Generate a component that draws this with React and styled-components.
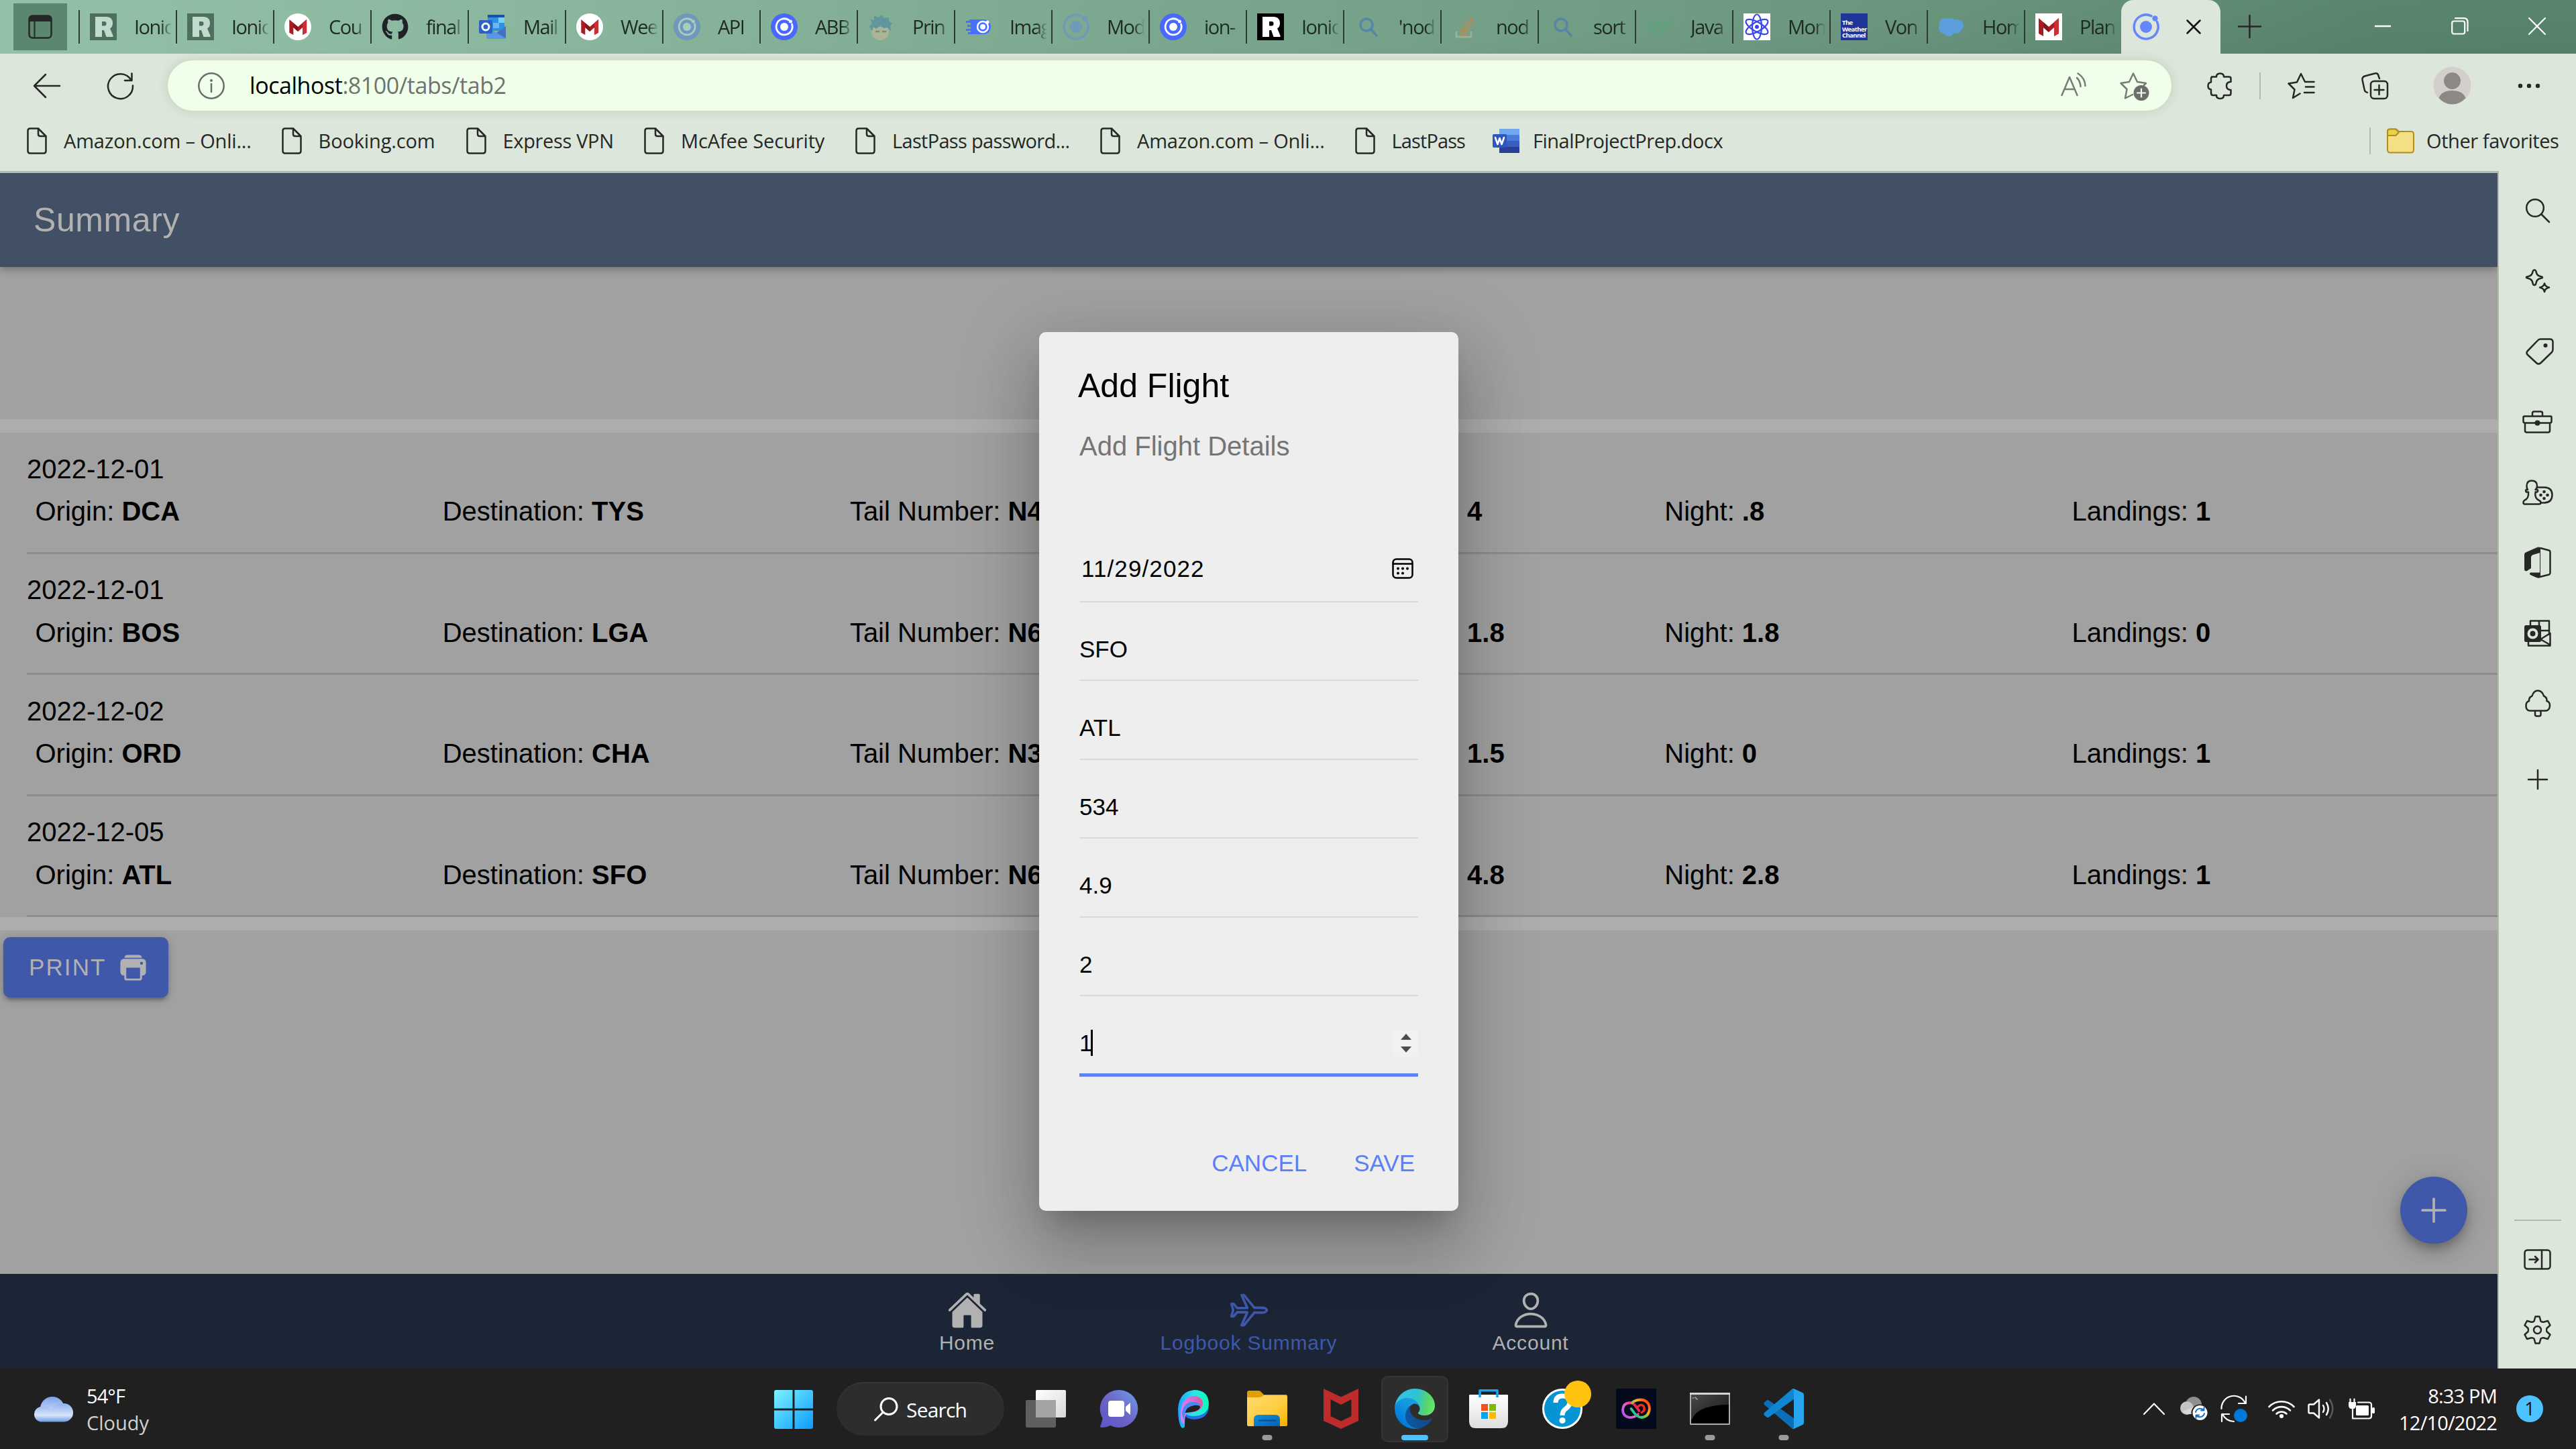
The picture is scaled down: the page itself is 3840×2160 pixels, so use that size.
import React from 'react';
import styled, { createGlobalStyle } from 'styled-components';
import { IoHome, IoAirplaneOutline, IoPersonOutline, IoPrint, IoAdd } from 'react-icons/io5';
import { FaGithub } from 'react-icons/fa';

const UI = '"Open Sans", "Noto Sans", sans-serif';
const PAGE = '"Liberation Sans", Arial, sans-serif';
const INK = '#252825';

const GlobalStyle = createGlobalStyle`
  * { box-sizing: border-box; }
  html, body { margin: 0; padding: 0; background: #202020; overflow: hidden; }
  svg { display: block; flex: none; }
`;

const Screen = styled.div`
  width: 3840px;
  height: 2160px;
  display: flex;
  flex-direction: column;
  overflow: hidden;
  font-family: ${UI};
`;

/* ---------- tab strip ---------- */
const TabStrip = styled.div`
  height: 80px;
  flex: none;
  display: flex;
  align-items: center;
  padding-left: 20px;
  background: linear-gradient(176deg, rgba(0, 0, 0, 0) 60%, rgba(0, 0, 0, 0.07) 100%),
    linear-gradient(98deg, #93c0a8 0%, #8bb79f 20%, #7ba78e 45%, #6c977f 72%, #5b8870 92%, #5b8870 100%);
`;
const TabActions = styled.div`
  width: 80px;
  height: 70px;
  background: #5b8770;
  display: flex;
  align-items: center;
  justify-content: center;
  margin-right: 17px;
`;
const Tab = styled.div`
  width: 145px;
  height: 50px;
  flex: none;
  display: flex;
  align-items: center;
  border-left: 2.5px solid #2c3b33;
  padding-left: 15px;
  gap: 26px;
`;
const Favicon = styled.div`
  width: 40px;
  height: 40px;
  flex: none;
  opacity: ${(p) => (p.$dim ? p.$dim : 1)};
`;
const TabTitle = styled.div`
  width: 55px;
  overflow: hidden;
  white-space: nowrap;
  font-size: 29px;
  line-height: 44px;
  letter-spacing: -1.5px;
  color: #1e2a23;
  -webkit-mask-image: linear-gradient(90deg, #000 72%, rgba(0, 0, 0, 0.1) 100%);
  mask-image: linear-gradient(90deg, #000 72%, rgba(0, 0, 0, 0.1) 100%);
`;
const ActiveTab = styled.div`
  width: 148px;
  height: 80px;
  flex: none;
  display: flex;
  align-items: center;
  padding-left: 17px;
  gap: 40px;
  background: #dce6da;
  border-radius: 18px 18px 0 0;
`;
const NewTab = styled.div`
  margin-left: 26px;
  margin-top: -2px;
`;
const WindowButtons = styled.div`
  margin-left: auto;
  display: flex;
  align-items: center;
  gap: 76px;
  padding-right: 38px;
  margin-top: -2px;
`;

/* ---------- toolbar ---------- */
const Toolbar = styled.div`
  height: 85px;
  flex: none;
  display: flex;
  align-items: center;
  padding: 10px 52px 0 48px;
  background: #dce6da;
`;
const ToolSlot = styled.div`
  flex: none;
  margin-left: ${(p) => p.$before || 0}px;
`;
const AddressBar = styled.div`
  flex: none;
  width: 2987px;
  height: 75px;
  margin-left: 51px;
  border-radius: 38px;
  background: #efffea;
  box-shadow: 0 0 16px rgba(90, 110, 80, 0.2);
  display: flex;
  align-items: center;
  padding: 0 33px 0 45px;
  position: relative;
`;
const Url = styled.div`
  flex: 1;
  margin-left: 37px;
  font-size: 34px;
  letter-spacing: -0.45px;
  color: #6f736f;
  margin-top: -2px;
`;
const Host = styled.span`
  color: #000;
`;
const Divider = styled.div`
  width: 2px;
  height: 40px;
  flex: none;
  background: #b0bbae;
  margin-left: ${(p) => p.$before || 0}px;
`;
const Avatar = styled.div`
  width: 57px;
  height: 57px;
  margin-left: 67px;
  flex: none;
`;

/* ---------- favourites ---------- */
const Favorites = styled.div`
  height: 90px;
  flex: none;
  display: flex;
  align-items: center;
  background: #dce6da;
  padding: 0 26px 0 40px;
`;
const Favorite = styled.div`
  flex: none;
  width: ${(p) => p.$w}px;
  display: flex;
  align-items: center;
  gap: ${(p) => p.$gap || 25}px;
  white-space: nowrap;
  font-size: 29px;
  letter-spacing: ${(p) => p.$ls}px;
  line-height: 44px;
  color: ${INK};
`;
const FavSpacer = styled.div`
  flex: 1;
`;

/* ---------- browser body ---------- */
const Body = styled.div`
  flex: 1;
  display: flex;
  min-height: 0;
`;
const PageFrame = styled.div`
  width: 3725px;
  flex: none;
  border-top: 3px solid #b0bbae;
  border-right: 2px solid #b0bbae;
  position: relative;
  display: flex;
  flex-direction: column;
  font-family: ${PAGE};
  overflow: hidden;
`;
const PageHeader = styled.div`
  height: 140px;
  flex: none;
  background: #425066;
  display: flex;
  align-items: center;
  padding-left: 50px;
  font-size: 50px;
  letter-spacing: 0.6px;
  color: #b1b1b1;
  box-shadow: 0 3px 12px rgba(0, 0, 0, 0.32);
  position: relative;
`;
const Content = styled.div`
  flex: 1;
  background: #a1a1a1;
`;
const TopSpace = styled.div`
  height: 227px;
`;
const Band = styled.div`
  height: 20px;
  background: #adadad;
`;
const Entry = styled.div`
  height: 180.5px;
  margin-left: 40px;
  padding-top: 28.5px;
  border-bottom: 3px solid #8d8d8d;
  font-size: 40px;
  line-height: 50px;
  color: #000;
`;
const EntryGrid = styled.div`
  display: grid;
  grid-template-columns: repeat(6, 607.2px);
  margin-top: 13.5px;
`;
const Cell = styled.div`
  padding-left: ${(p) => p.$indent || 12.5}px;
  white-space: nowrap;
`;
const PrintButton = styled.div`
  width: 246px;
  height: 90px;
  margin: 10px 0 0 5px;
  border-radius: 10px;
  background: #3f58a9;
  color: #b1b1b1;
  font-size: 35px;
  letter-spacing: 2.1px;
  display: flex;
  align-items: center;
  padding-left: 38px;
  gap: 16px;
  box-shadow: 0 8px 3px -5px rgba(0, 0, 0, 0.14), 0 5px 5px rgba(0, 0, 0, 0.1), 0 3px 13px rgba(0, 0, 0, 0.2);
`;
const Fab = styled.div`
  position: absolute;
  left: 3578px;
  top: 1496px;
  width: 100px;
  height: 100px;
  border-radius: 50%;
  background: #3f58a9;
  color: #b1b1b1;
  display: flex;
  align-items: center;
  justify-content: center;
  box-shadow: 0 8px 13px -2px rgba(0, 0, 0, 0.2), 0 15px 25px rgba(0, 0, 0, 0.14), 0 3px 45px rgba(0, 0, 0, 0.12);
`;
const TabBar = styled.div`
  height: 141px;
  flex: none;
  background: #1b2536;
  display: flex;
  justify-content: center;
`;
const TabBarItem = styled.div`
  width: 420px;
  padding-top: 24px;
  display: flex;
  flex-direction: column;
  align-items: center;
  font-size: 30px;
  line-height: 37px;
  letter-spacing: 0.8px;
  color: ${(p) => (p.$active ? '#3f58a9' : '#b1b1b1')};
`;

/* ---------- dialog ---------- */
const Dialog = styled.div`
  position: absolute;
  left: 1549px;
  top: 237px;
  width: 625px;
  height: 1310px;
  border-radius: 10px;
  background: #eee;
  padding: 50px 60px 0;
  color: #000;
  box-shadow: 0 28px 38px -18px rgba(0, 0, 0, 0.2), 0 60px 95px 8px rgba(0, 0, 0, 0.14),
    0 22px 115px 20px rgba(0, 0, 0, 0.12);
`;
const DialogTitle = styled.div`
  margin-left: -2px;
  font-size: 50px;
  line-height: 60px;
`;
const DialogSubtitle = styled.div`
  margin-top: 35px;
  font-size: 40px;
  line-height: 50px;
  color: #757575;
`;
const Fields = styled.div`
  margin-top: 90px;
`;
const Field = styled.div`
  height: ${(p) => (p.$focus ? 119.5 : 117.5)}px;
  display: flex;
  align-items: center;
  justify-content: space-between;
  padding-top: ${(p) => (p.$date ? 21 : 25)}px;
  padding-right: ${(p) => (p.$date ? 7 : 0)}px;
  padding-left: ${(p) => (p.$date ? 3 : 0)}px;
  border-bottom: ${(p) => (p.$focus ? '5px solid #5d83f7' : '2.5px solid #d9d9d9')};
  font-size: 35px;
  letter-spacing: ${(p) => (p.$date ? 1.1 : 0)}px;
`;
const FieldValue = styled.div`
  display: flex;
  align-items: center;
`;
const Caret = styled.div`
  width: 3px;
  height: 39px;
  margin-left: -2px;
  background: #000;
`;
const Spinner = styled.div`
  width: 37px;
  height: 40px;
  background: #f1f1f1;
  display: flex;
  flex-direction: column;
  align-items: center;
  justify-content: center;
  gap: 10px;
`;
const Arrow = styled.div`
  width: 0;
  height: 0;
  border-left: 8.5px solid transparent;
  border-right: 8.5px solid transparent;
  ${(p) => (p.$down ? 'border-top' : 'border-bottom')}: 9px solid #4d4d4d;
`;
const Actions = styled.div`
  height: 90px;
  margin-top: 84px;
  display: flex;
  align-items: center;
  justify-content: flex-end;
  gap: 70px;
  padding-right: 5px;
  font-size: 35px;
  color: #5a80f5;
`;

/* ---------- sidebar ---------- */
const Sidebar = styled.div`
  flex: 1;
  background: #dce6da;
  display: flex;
  flex-direction: column;
  align-items: center;
  padding: 6px 0 5px;
`;
const SideSlot = styled.div`
  height: ${(p) => p.$h || 105}px;
  flex: none;
  display: flex;
  align-items: center;
  justify-content: center;
  padding-left: ${(p) => p.$nudge || 0}px;
`;
const SideRule = styled.div`
  width: 70px;
  height: 2px;
  margin-top: auto;
  margin-bottom: 5px;
  background: #b0bbae;
`;

/* ---------- taskbar ---------- */
const Taskbar = styled.div`
  height: 120px;
  flex: none;
  background: #202020;
  display: flex;
  align-items: center;
  color: #fff;
`;
const Weather = styled.div`
  width: 1127px;
  padding: 2px 0 0 49px;
  display: flex;
  align-items: center;
  gap: 19px;
  font-size: 29px;
  line-height: 40px;
  letter-spacing: -0.9px;
`;
const Muted = styled.div`
  color: #cfcfcf;
  letter-spacing: 0;
`;
const AppSlot = styled.div`
  width: 110px;
  height: 100px;
  flex: none;
  display: flex;
  justify-content: center;
  align-items: center;
  position: relative;
`;
const AppTile = styled.div`
  width: 100px;
  height: 99px;
  border-radius: 10px;
  background: #2d2d2d;
  border: 2px solid #353535;
  display: flex;
  align-items: center;
  justify-content: center;
`;
const Indicator = styled.div`
  position: absolute;
  bottom: 3px;
  left: 50%;
  transform: translateX(-50%);
  width: ${(p) => (p.$active ? 40 : 15)}px;
  height: 8px;
  border-radius: 4px;
  background: ${(p) => (p.$active ? '#4cc2ff' : '#9a9a9a')};
`;
const SearchPill = styled.div`
  width: 250px;
  height: 80px;
  margin: 0 7px 0 10px;
  border-radius: 40px;
  background: #2d2d2d;
  border-top: 2px solid #363636;
  display: flex;
  align-items: center;
  padding-left: 56px;
  gap: 12px;
  font-size: 30px;
  letter-spacing: -0.8px;
`;
const Tray = styled.div`
  margin-left: auto;
  display: flex;
  align-items: center;
  padding-right: 49px;
`;
const TraySlot = styled.div`
  margin-right: ${(p) => p.$after || 0}px;
`;
const Clock = styled.div`
  width: 182px;
  padding-top: 1px;
  text-align: right;
  font-size: 29px;
  line-height: 40px;
  letter-spacing: -0.8px;
  white-space: nowrap;
`;
const Badge = styled.div`
  width: 40px;
  height: 40px;
  margin-left: 29px;
  border-radius: 50%;
  background: #4cc2ff;
  color: #111;
  font-size: 27px;
  line-height: 39px;
  text-align: center;
`;

/* ---------- icon helper ---------- */
const Icon = ({ w = 40, h = 40, vb, stroke = INK, sw = 2.5, fill = 'none', children }) => (
  <svg width={w} height={h} viewBox={vb || `0 0 ${w} ${h}`} fill={fill} stroke={stroke} strokeWidth={sw}
    strokeLinecap="round" strokeLinejoin="round" overflow="visible">
    {children}
  </svg>
);

/* ---------- favicons ---------- */
const RLogo = ({ bg, fg }) => (
  <Icon stroke="none">
    <rect width="40" height="40" fill={bg} />
    <path fill={fg} fillRule="evenodd" d="M8 5H24C31 5 34 9 34 14.5C34 18.5 32.5 21 30 22.5L34.5 33V35H24.500L21 25H18V35H8ZM18 12V18.500H21.500C23.500 18.500 24.500 17.300 24.500 15.200C24.500 13 23.500 12 21.500 12Z" />
  </Icon>
);
const MShape = ({ y = 0 }) => (
  <g transform={`translate(0 ${y})`} stroke="none">
    <path fill="#a81c22" d="M5 8L20 21L35 8V31L28 35V22L20 29L12 22V35L5 31Z" />
    <path fill="#7c1217" d="M5 8L20 21V29L12 22V14Z" opacity=".75" />
    <path fill="#c93036" d="M35 8L28 14V35L35 31Z" />
  </g>
);
const MRound = () => (
  <Icon><circle cx="20" cy="20" r="20" fill="#fff" stroke="none" /><g transform="translate(3 2) scale(.86)"><MShape /></g></Icon>
);
const MSquare = () => (
  <Icon><rect width="40" height="40" fill="#fff" stroke="none" /><MShape y={-1} /></Icon>
);
const GitHub = () => <FaGithub size={40} color="#1f2328" />;
const Outlook = () => (
  <Icon stroke="none">
    <rect x="13" y="2" width="25" height="24" fill="#2f8fe0" />
    <rect x="13" y="2" width="25" height="4" fill="#1d4f9f" />
    <rect x="29" y="6" width="9" height="8" fill="#7cd0f5" />
    <rect x="21" y="14" width="9" height="8" fill="#6db8f0" />
    <path d="M11 20L26 29L40 19V36Q40 38 38 38H13Q11 38 11 36Z" fill="#5a95e6" />
    <path d="M26 29L40 37V19Z" fill="#3f72c8" />
    <rect x="0" y="10" width="20" height="20" rx="2" fill="#2c62c4" />
    <circle cx="10" cy="20" r="5" fill="none" stroke="#fff" strokeWidth="3" />
  </Icon>
);
const IonicRound = ({ bg = '#4868ff', fg = '#fff' }) => (
  <Icon stroke="none">
    <circle cx="20" cy="20" r="20" fill={bg} />
    <path d="M27 10A12 12 0 1 0 31.500 16" fill="none" stroke={fg} strokeWidth="2.800" />
    <circle cx="20" cy="20" r="6" fill={fg} />
    <circle cx="29.500" cy="12" r="2.500" fill={fg} />
  </Icon>
);
const IonicOrbit = ({ c = '#6488fb' }) => (
  <Icon stroke="none">
    <path d="M28 3.800A18 18 0 1 0 36.500 12.500" fill="none" stroke={c} strokeWidth="3.600" />
    <circle cx="20" cy="20" r="9" fill={c} />
    <circle cx="33.500" cy="7.500" r="4.200" fill={c} />
  </Icon>
);
const Anime = () => (
  <Icon stroke="none">
    <ellipse cx="18" cy="27" rx="13" ry="13" fill="#b9b795" />
    <path d="M2 20L6 14L3 9L9 10L9 3L16 6L20 2L24 7L31 6L31 11L36 15L33 18L34 26L29 21L24 22L18 19L12 23L8 20L6 26Z" fill="#5590a0" />
    <path d="M12 27H16M22 27H26" stroke="#6d7f76" strokeWidth="2.500" />
  </Icon>
);
const IonicSpeed = () => (
  <Icon stroke="none">
    <path fill="#4870ff" d="M6 9H28A10 11 0 0 1 28 31H4V28H8V26H1V23H8V20H3V17H8V14H1V11H6Z" />
    <circle cx="26" cy="20" r="8" fill="none" stroke="#fff" strokeWidth="2.500" />
    <circle cx="26" cy="20" r="4" fill="#fff" />
    <circle cx="33" cy="13" r="2.500" fill="#fff" />
  </Icon>
);
const Magnifier = () => (
  <Icon stroke="#4f7fb0" sw={3.5}><circle cx="18" cy="17" r="9" /><path d="M25 24L33 33" /></Icon>
);
const StackOv = () => (
  <Icon stroke="#c08a4c" sw={3.5}>
    <path d="M7 28V35H29V28" stroke="#a9b8a8" strokeWidth="2.500" strokeLinejoin="miter" />
    <path d="M12 31H24M12.500 25L25 27M15 18L26 23M20 11L29 19M27 6L33 15" strokeLinecap="butt" />
  </Icon>
);
const W3 = () => (
  <Icon stroke="none">
    <path fill="#5aa57e" d="M1 9H8L11 22L15 9H21L24 22L27 12H33L27 34H22L18 20L13 34H8Z" />
    <path d="M32 6Q38 5 37 9Q36 11 34 11Q39 11 38 15Q36 18 32 16" fill="none" stroke="#5aa57e" strokeWidth="2.500" />
  </Icon>
);
const ReactAtom = () => (
  <Icon stroke="#3b46e8" sw={2.2}>
    <rect width="40" height="40" fill="#fff" stroke="none" />
    <ellipse cx="20" cy="20" rx="7" ry="18.500" />
    <ellipse cx="20" cy="20" rx="7" ry="18.500" transform="rotate(60 20 20)" />
    <ellipse cx="20" cy="20" rx="7" ry="18.500" transform="rotate(120 20 20)" />
    <circle cx="20" cy="20" r="3" fill="#3b46e8" stroke="none" />
  </Icon>
);
const WeatherBox = styled.div`
  width: 40px;
  height: 40px;
  background: #20359a;
  color: #fff;
  font: 700 9.5px/9.6px "Open Sans", sans-serif;
  letter-spacing: -0.6px;
  padding: 9px 0 0 2px;
`;
const WeatherChannel = () => <WeatherBox>The<br />Weather<br />Channel</WeatherBox>;
const BlueCloud = () => (
  <Icon stroke="none">
    <g fill="#5b9fdf"><circle cx="10" cy="15" r="8" /><circle cx="19" cy="15" r="8" /><circle cx="29" cy="18" r="9" /><circle cx="9" cy="22" r="8" /><circle cx="16" cy="26" r="8" /><circle cx="27" cy="22" r="8" /></g>
  </Icon>
);

const TABS = [
  { t: 'Ionic', i: <RLogo bg="#4e6f5e" fg="#c0dacb" /> },
  { t: 'Ionic', i: <RLogo bg="#4e6f5e" fg="#c0dacb" /> },
  { t: 'Cou', i: <MRound /> },
  { t: 'final', i: <GitHub /> },
  { t: 'Mail', i: <Outlook /> },
  { t: 'Wee', i: <MRound /> },
  { t: 'API', i: <IonicRound bg="#6f98bf" fg="#a9cdbd" /> },
  { t: 'ABB', i: <IonicRound /> },
  { t: 'Prin', i: <Anime />, dim: 0.75 },
  { t: 'Imag', i: <IonicSpeed /> },
  { t: 'Mod', i: <IonicOrbit c="#6f9ab8" /> },
  { t: 'ion-', i: <IonicRound /> },
  { t: 'Ionic', i: <RLogo bg="#000" fg="#fff" /> },
  { t: "'nod", i: <Magnifier />, dim: 0.8 },
  { t: 'nod', i: <StackOv />, dim: 0.75 },
  { t: 'sort', i: <Magnifier />, dim: 0.8 },
  { t: 'Java', i: <W3 />, dim: 0.5 },
  { t: 'Mon', i: <ReactAtom /> },
  { t: 'Von', i: <WeatherChannel /> },
  { t: 'Hom', i: <BlueCloud /> },
  { t: 'Plan', i: <MSquare /> },
];

const PageIcon = () => (
  <Icon w={30} h={40}><path d="M5 1.500H17L28.500 13V35Q28.500 38.500 25 38.500H5Q1.500 38.500 1.500 35V5Q1.500 1.500 5 1.500ZM17 1.500V10Q17 13 20 13H28.500" /></Icon>
);
const WordIcon = () => (
  <Icon stroke="none">
    <rect x="10" y="2" width="30" height="9" fill="#6fa8ee" /><rect x="10" y="11" width="30" height="9" fill="#4a7ad8" />
    <rect x="10" y="20" width="30" height="9" fill="#3a5cc0" /><rect x="10" y="29" width="30" height="9" fill="#283f95" />
    <rect x="0" y="10" width="21" height="20" rx="2" fill="#2f56bd" />
    <path d="M4 15L7.500 25L10.500 16L13.500 25L17 15" fill="none" stroke="#fff" strokeWidth="2.600" />
  </Icon>
);
const FolderIcon = () => (
  <Icon stroke="#b08e20" sw={2}>
    <path d="M1 12V33Q1 37.500 5 37.500H36Q40 37.500 40 33V10Q40 6 36 6H18L14 2.500H5Q1 2.500 1 6Z" fill="#f5df85" />
    <path d="M1 12V6Q1 2.500 5 2.500H13L18 7L13.500 12Z" fill="#ecd04a" />
  </Icon>
);
const FAVORITES = [
  { t: 'Amazon.com – Onli...', w: 379.600, ls: -0.18, i: <PageIcon /> },
  { t: 'Booking.com', w: 275, ls: -0.15, i: <PageIcon /> },
  { t: 'Express VPN', w: 265.400, ls: -0.35, i: <PageIcon /> },
  { t: 'McAfee Security', w: 315, ls: -0.12, i: <PageIcon /> },
  { t: 'LastPass password...', w: 365, ls: -0.68, i: <PageIcon /> },
  { t: 'Amazon.com – Onli...', w: 379.600, ls: -0.18, i: <PageIcon /> },
  { t: 'LastPass', w: 205.400, ls: -0.9, i: <PageIcon /> },
  { t: 'FinalProjectPrep.docx', w: 360, gap: 20, ls: -0.48, i: <WordIcon /> },
];

const ENTRIES = [
  { date: '2022-12-01', from: 'DCA', to: 'TYS', tail: 'N4', hours: '4', night: '.8', landings: '1' },
  { date: '2022-12-01', from: 'BOS', to: 'LGA', tail: 'N6', hours: '1.8', night: '1.8', landings: '0' },
  { date: '2022-12-02', from: 'ORD', to: 'CHA', tail: 'N3', hours: '1.5', night: '0', landings: '1' },
  { date: '2022-12-05', from: 'ATL', to: 'SFO', tail: 'N6', hours: '4.8', night: '2.8', landings: '1' },
];

/* ---------- sidebar icons ---------- */
const SIDE = [
  { i: <Icon w={36} h={36}><circle cx="14" cy="14" r="12.800" /><path d="M23.500 23.500L35 35" /></Icon> },
  { i: (
    <Icon w={36} h={35}>
      <path d="M13 1.500Q15 1.500 15.500 4Q16.500 10 22 11Q25 11.500 25 12.500Q25 13.500 22 14Q16.500 15 15.500 21Q15 24 13 24Q11 24 10.500 21Q9.500 15 4 14Q1 13.500 1 12.500Q1 11.500 4 11Q9.500 10 10.500 4Q11 1.500 13 1.500Z" />
      <path d="M28 21.500Q29 26.500 35 27.500Q29 28.500 28 34Q27 28.500 21 27.500Q27 26.500 28 21.500Z" />
    </Icon>) },
  { n: 6, i: (
    <Icon w={42} h={40}>
      <path d="M22 1.500H36Q40.500 1.500 40.500 6V17Q40.500 19.500 38.500 21.500L22.500 37Q19 40 16 37L3 25Q0 22 3 19L17.500 4Q19.500 1.500 22 1.500Z" />
      <circle cx="29.500" cy="11" r="3" fill={INK} stroke="none" />
    </Icon>) },
  { i: (
    <Icon w={45} h={34}>
      <path d="M15 8V4Q15 1.500 17.500 1.500H27.500Q30 1.500 30 4V8M3 8.500H42Q43.500 8.500 43.500 10V16Q43.500 18.500 41 18.500H4Q1.500 18.500 1.500 16V10Q1.500 8.500 3 8.500ZM4 19V30Q4 32.500 6.500 32.500H38.500Q41 32.500 41 30V19" />
      <circle cx="22.500" cy="18.500" r="4" fill={INK} stroke="none" />
    </Icon>) },
  { i: (
    <Icon w={46} h={38}>
      <path d="M8 15H5.500Q4.500 17 6 18.500H9Q10 28 3 31Q1.500 32 1.500 34Q1.500 36.500 3.500 36.500H25Q27.500 36.500 27.500 34Q27.500 32 25 31Q18 28 19.500 18.500H22Q24 17 22.500 15H19.500Q22 13 22 9.500Q22 1.500 14 1.500Q6.500 1.500 6.500 9.500Q6.500 13 8 15Z" />
      <path d="M23 11.500H33Q44.500 12 44.500 22.500Q44.500 34 33 34.500H28" />
      <g fill={INK} stroke="none"><circle cx="32.500" cy="18" r="2.300" /><circle cx="32.500" cy="28" r="2.300" /><circle cx="27.500" cy="23" r="2.300" /><circle cx="37.500" cy="23" r="2.300" /></g>
    </Icon>) },
  { i: (
    <Icon w={41} h={47}>
      <path d="M25 2L38 5.500Q39.500 6 39.500 8V39Q39.500 41 38 41.500L22 45.500" />
      <path d="M1 12Q1 9 4 8L20 1Q22 0 25 1.500V45Q22 47 19 46L10 42Q8 40 10 38.500H24V9L14 12Q11 13 11 16V32L5 36Q1 37 1 33Z" fill={INK} stroke="none" />
    </Icon>) },
  { i: (
    <Icon w={40} h={40}>
      <path d="M9 8V1.500H37V20M37 16H25M22 2V8M6 32V38.500H38.500V20L24 29L38 37" />
      <rect x="0" y="8" width="25" height="25" rx="2.500" fill={INK} stroke="none" />
      <circle cx="12.500" cy="20.500" r="6" stroke="#dce6da" strokeWidth="4" />
    </Icon>) },
  { i: (
    <Icon w={38} h={41}>
      <path d="M7 31.500Q1.500 31 1.500 24Q1.500 18 6 17Q5.500 11.500 10.500 9.500Q13 1.500 19 1.500Q25.500 1.500 28 9.500Q33 11.500 32.500 17Q37 18 37 24Q36.500 31 31 31.500ZM15 32V37Q15 39.500 17.500 39.500H21Q23.500 39.500 23.500 37V32" />
    </Icon>) },
  { h: 122, i: <Icon w={30} h={30}><path d="M15 1V29M1 15H29" /></Icon> },
];

/* ---------- taskbar icons ---------- */
const Start = () => (
  <Icon w={58} h={58} stroke="none">
    <defs><linearGradient id="st" x1="0" y1="0" x2="1" y2="1" gradientUnits="objectBoundingBox"><stop offset="0" stopColor="#7df2ff" /><stop offset="1" stopColor="#0a9bff" /></linearGradient></defs>
    <path transform="translate(1 1)" fill="url(#st)" d="M3 0H27.500V27.500H0V3Q0 0 3 0ZM30.500 0H55Q58 0 58 3V27.500H30.500ZM0 30.500H27.500V58H3Q0 58 0 55ZM30.500 30.500H58V55Q58 58 55 58H30.500Z" />
  </Icon>
);
const TaskView = () => (
  <Icon w={60} h={56} stroke="none">
    <defs><linearGradient id="tv" x1="0" y1="0" x2="1" y2="1"><stop offset="0" stopColor="#fff" /><stop offset="1" stopColor="#d8d8d8" /></linearGradient></defs>
    <rect x="15" width="45" height="41" rx="2" fill="url(#tv)" />
    <rect y="15" width="45" height="41" rx="2" fill="#666" fillOpacity=".9" />
    <rect x="15" y="15" width="30" height="26" fill="#a4a4a4" />
  </Icon>
);
const Chat = () => (
  <Icon w={58} h={56} stroke="none">
    <defs><linearGradient id="ch" x1="0" y1="1" x2="1" y2="0"><stop offset="0" stopColor="#5a55cf" /><stop offset=".45" stopColor="#6b62c2" /><stop offset="1" stopColor="#6f9df0" /></linearGradient></defs>
    <path fill="url(#ch)" d="M29 0A28.500 28 0 1 1 15 53Q9 56 1.500 56Q-1 55.500 1 52Q3 47 3.500 42A28 28 0 0 1 29 0Z" />
    <rect x="12" y="16" width="24" height="24" rx="4" fill="#fff" /><path d="M38 25L45 19V37L38 31Z" fill="#fff" />
  </Icon>
);
const PLogo = () => (
  <Icon w={46} h={57} stroke="none">
    <defs>
      <linearGradient id="p1" x1="0" y1="0" x2="1" y2="0"><stop offset="0" stopColor="#16a4ff" /><stop offset=".5" stopColor="#2fe3e6" /><stop offset="1" stopColor="#08ffb8" /></linearGradient>
      <linearGradient id="p2" x1="0" y1="0" x2="1" y2="0"><stop offset="0" stopColor="#d080ff" /><stop offset="1" stopColor="#dd5aa0" /></linearGradient>
    </defs>
    <path fill="#2470e8" d="M11 32Q34 38 46 25Q45 43 24 44Q12 43 11 38Z" />
    <path fill="url(#p1)" d="M24 0Q46 0 46 22Q44 39 22 39Q14 39 11 35Q10 45 10 55Q8 58 5 56Q0 48 0 28Q2 2 24 0Z" />
    <path fill="url(#p2)" d="M22 9Q37 9 37 21Q36 33 14 34Q10 38 9 50Q5 52 4 42Q2 12 22 9Z" />
    <path fill="#4a88f0" d="M20 18Q34 17 34 25Q30 22 22 24Q10 28 9 44Q4 36 8 27Q12 19 20 18Z" />
    <path fill="#202020" d="M11 33Q13 25 24 23Q33 22 33 26Q31 33 11 34Z" />
  </Icon>
);
const Explorer = () => (
  <Icon w={60} h={54} stroke="none">
    <defs>
      <linearGradient id="ex" x1="0" y1="0" x2="1" y2="1"><stop offset="0" stopColor="#ffdc70" /><stop offset=".6" stopColor="#ffcb3c" /><stop offset="1" stopColor="#f3b000" /></linearGradient>
      <linearGradient id="eb" x1="0" y1="0" x2="1" y2="1"><stop offset="0" stopColor="#1190de" /><stop offset="1" stopColor="#0560b4" /></linearGradient>
    </defs>
    <path d="M0 3Q0 0 3 0H17Q20 0 21 2L25 6H58Q60 6 60 9V14H0Z" fill="#e0a005" />
    <path d="M0 10H18Q21 10 25 7H57Q60 7 60 10V51Q60 53 58 53H2Q0 53 0 51Z" fill="url(#ex)" />
    <path d="M10 53V43Q10 36 17 36H42Q49 36 49 43V53Z" fill="url(#eb)" />
    <path d="M18 44.500H42" stroke="#07488c" strokeWidth="2.200" />
  </Icon>
);
const McAfee = () => (
  <Icon w={52} h={60} stroke="none">
    <path fillRule="evenodd" fill="#bd2c2b" d="M0 0L26 12.500L52 0V48L26 60L0 48ZM10.500 16V41L26 48.500L41.500 41V16L26 24Z" />
  </Icon>
);
const Edge = () => (
  <Icon w={60} h={60} vb="0 0 256 256" stroke="none">
    <defs>
      <linearGradient id="e1" x1="58" y1="177" x2="236" y2="177" gradientUnits="userSpaceOnUse"><stop offset="0" stopColor="#0c59a4" /><stop offset="1" stopColor="#114a8b" /></linearGradient>
      <linearGradient id="e2" x1="150" y1="90" x2="40" y2="220" gradientUnits="userSpaceOnUse"><stop offset="0" stopColor="#1b9de2" /><stop offset=".4" stopColor="#1595df" /><stop offset="1" stopColor="#0078d7" /></linearGradient>
      <linearGradient id="e3" x1="0" y1="80" x2="256" y2="130" gradientUnits="userSpaceOnUse"><stop offset="0" stopColor="#35c1f1" /><stop offset=".5" stopColor="#2cc3d2" /><stop offset=".8" stopColor="#58d66a" /><stop offset="1" stopColor="#66eb6e" /></linearGradient>
    </defs>
    <path fill="url(#e1)" d="M231.070 190.540c-3.400 1.800-6.900 3.350-10.530 4.710a101.850 101.850 0 0 1-35.910 6.460c-47.320 0-88.540-32.550-88.540-74.320A31.480 31.480 0 0 1 112.550 100c-42.800 1.800-53.800 46.400-53.800 72.530 0 73.880 68.090 81.370 82.760 81.370 7.910 0 19.840-2.300 27-4.560l1.310-.44a128.340 128.340 0 0 0 66.600-52.800 4 4 0 0 0-5.350-5.560Z" />
    <path fill="url(#e2)" d="M105.740 241.400a79.190 79.190 0 0 1-22.740-21.330 80.720 80.720 0 0 1 29.530-120c3.120-1.470 8.450-4.130 15.540-4a32.350 32.350 0 0 1 25.690 13 31.880 31.880 0 0 1 6.360 18.660c0-.21 24.460-79.600-80-79.600-43.900 0-80 41.660-80 78.210a130.150 130.150 0 0 0 12.110 56 128 128 0 0 0 156.380 67.110 75.550 75.550 0 0 1-62.780-8Z" />
    <path fill="url(#e3)" d="M152.330 148.860c-.81 1.050-3.300 2.500-3.300 5.660 0 2.610 1.700 5.120 4.720 7.230 14.380 10 41.490 8.680 41.560 8.680a59.560 59.560 0 0 0 30.270-8.350A61.380 61.380 0 0 0 256 109.200c.26-22.410-8-37.310-11.340-43.910C223.460 23.840 177.720 0 128 0A128 128 0 0 0 0 126.200c.48-36.540 36.800-66.050 80-66.050 3.500 0 23.460.34 42 10.070 16.340 8.580 24.900 18.940 30.850 29.210 6.180 10.670 7.280 24.150 7.280 29.520s-2.740 13.330-7.800 19.910Z" />
  </Icon>
);
const Store = () => (
  <Icon w={58} h={58} stroke="none">
    <defs><linearGradient id="so" x1="0" y1="0" x2="0" y2="1"><stop offset="0" stopColor="#fff" /><stop offset="1" stopColor="#dedede" /></linearGradient></defs>
    <path d="M1 8H57Q58 8 58 9V48Q58 58 48 58H10Q0 58 0 48V9Q0 8 1 8Z" fill="url(#so)" />
    <path d="M16 12V1.800H42V12" fill="none" stroke="#1ea0ee" strokeWidth="3.600" strokeLinecap="butt" />
    <rect x="18" y="22" width="10" height="10" fill="#f25022" /><rect x="30" y="22" width="10" height="10" fill="#7fba00" />
    <rect x="18" y="34" width="10" height="10" fill="#00a4ef" /><rect x="30" y="34" width="10" height="10" fill="#ffb900" />
  </Icon>
);
const Help = () => (
  <Icon w={60} h={60} stroke="none">
    <circle cx="30" cy="30" r="28.500" fill="#0594d4" stroke="#fff" strokeWidth="3" />
    <path d="M20 21Q20 11 30 11Q41 11 41 20Q41 26 35 30Q30 33 30 40" fill="none" stroke="#fff" strokeWidth="7" strokeLinecap="butt" />
    <circle cx="30" cy="47.500" r="4.600" fill="#fff" />
    <circle cx="53" cy="8" r="20" fill="#ffc20e" />
  </Icon>
);
const CreativeCloud = () => (
  <Icon w={60} h={60} stroke="none">
    <defs>
      <linearGradient id="c1" x1="8" y1="42" x2="40" y2="18" gradientUnits="userSpaceOnUse"><stop offset="0" stopColor="#9a50ff" /><stop offset=".4" stopColor="#f060c0" /><stop offset=".75" stopColor="#f01030" /><stop offset="1" stopColor="#ff2010" /></linearGradient>
      <linearGradient id="c2" x1="20" y1="42" x2="48" y2="16" gradientUnits="userSpaceOnUse"><stop offset="0" stopColor="#20a0ff" /><stop offset=".35" stopColor="#40d060" /><stop offset=".65" stopColor="#ffb020" /><stop offset="1" stopColor="#ff2010" /></linearGradient>
    </defs>
    <rect width="60" height="60" fill="#020a1c" />
    <path d="M33 38Q28 43 20 43Q10 41 10 31.500Q10.500 22 20 21Q25 21 28.500 25L34.500 33" stroke="url(#c1)" strokeWidth="3.800" />
    <path d="M24 21Q29 16.500 38 16.500Q49.500 18 50 29.500Q49 42 38 43Q31 42 27 36L22.500 30" stroke="url(#c2)" strokeWidth="3.800" />
    <path d="M33 26.500Q38 22 41.500 26.500Q44 33 38 35.500" stroke="#f22a20" strokeWidth="3.400" />
  </Icon>
);
const Terminal = () => (
  <Icon w={60} h={48} stroke="none">
    <defs><linearGradient id="te" x1="0" y1="0" x2="1" y2="1"><stop offset="0" stopColor="#4a4a4a" /><stop offset="1" stopColor="#161616" /></linearGradient></defs>
    <rect x="1" y="1" width="58" height="46" fill="#000" stroke="#a9aeb2" strokeWidth="2" />
    <path d="M2 3H58V18Q12 18 3 40H2Z" fill="url(#te)" />
    <rect x="0" y="0" width="60" height="3" fill="#d4d6d8" />
    <path d="M4 8H6M8 7L11 10" stroke="#bbb" strokeWidth="1.200" />
  </Icon>
);
const VsCode = () => (
  <Icon w={60} h={60} stroke="none">
    <path d="M1 20.500L4.500 17.500Q6 16.500 8 17.500L46 45V58Q44 60 42 59L1 24Q-0.500 22.500 1 20.500Z" fill="#0b6fb8" />
    <path d="M1 39.500L4.500 42.500Q6 43.500 8 42.500L46 15V2Q44 0 42 1L1 36Q-0.500 37.500 1 39.500Z" fill="#1085d2" />
    <path d="M42 1Q44 -0.500 46 .5L58 6Q60 7 60 9V51Q60 53 58 54L46 59.500Q44 60.500 42 59Q45 60 45 56.500V3.500Q45 0 42 1Z" fill="#27a4ee" />
  </Icon>
);
const APPS = [
  { i: <TaskView /> }, { i: <Chat /> }, { i: <PLogo /> }, { i: <Explorer />, run: true }, { i: <McAfee /> },
  { i: <Edge />, active: true }, { i: <Store /> }, { i: <Help /> }, { i: <CreativeCloud /> },
  { i: <Terminal />, run: true }, { i: <VsCode />, run: true },
];

const WeatherCloud = () => (
  <Icon w={61} h={40} stroke="none">
    <defs>
      <linearGradient id="w1" x1="0" y1="0" x2="0" y2="1"><stop offset="0" stopColor="#7ea2ea" /><stop offset=".5" stopColor="#b9cdf2" /><stop offset="1" stopColor="#b9cdf2" /></linearGradient>
      <linearGradient id="w2" x1="0" y1="0" x2="0" y2="1"><stop offset="0" stopColor="#8fb0ee" /><stop offset=".65" stopColor="#d5e4f8" /><stop offset="1" stopColor="#6f9ae6" /></linearGradient>
    </defs>
    <circle cx="29" cy="19" r="18" fill="url(#w1)" />
    <path d="M11 38.500A11.500 11.500 0 0 1 11 16Q20 13 28 21Q34 11 46 11A13.500 13.700 0 0 1 47 38.500Z" fill="url(#w2)" />
  </Icon>
);

export default function App() {
  return (
    <Screen>
      <GlobalStyle />
      <TabStrip>
        <TabActions>
          <Icon w={36} h={36}>
            <rect x="1.500" y="1.500" width="33" height="33" rx="5" />
            <path d="M1 10V6Q1 1 6 1H30Q35 1 35 6V10Z" fill={INK} stroke="none" />
            <path d="M9.500 10V34" strokeWidth="2" />
          </Icon>
        </TabActions>
        {TABS.map((t, k) => (
          <Tab key={k}>
            <Favicon $dim={t.dim}>{t.i}</Favicon>
            <TabTitle>{t.t}</TabTitle>
          </Tab>
        ))}
        <ActiveTab>
          <IonicOrbit />
          <Icon w={22} h={22} stroke="#111"><path d="M1.500 1.500L20.500 20.500M20.500 1.500L1.500 20.500" /></Icon>
        </ActiveTab>
        <NewTab><Icon w={35} h={35}><path d="M17.500 1V34M1 17.500H34" /></Icon></NewTab>
        <WindowButtons>
          <Icon w={39} h={26} stroke="#fff"><path d="M1 13H25" strokeLinecap="butt" strokeWidth="2.500" /></Icon>
          <Icon w={39} h={26} stroke="#fff" sw={2.2}>
            <rect x="1.200" y="5.500" width="19" height="19" rx="3" />
            <path d="M6 1.200H19Q24.500 1.200 24.500 7V20" />
          </Icon>
          <Icon w={33} h={26} stroke="#fff" sw={2.2}><path d="M1 1L25 25M25 1L1 25" /></Icon>
        </WindowButtons>
      </TabStrip>

      <Toolbar>
        <ToolSlot><Icon><path d="M41 20H3M20 3L3 20L20 37" /></Icon></ToolSlot>
        <ToolSlot $before={71}>
          <Icon><path d="M39 19.500A18.500 18.500 0 1 1 36 10.500M37.500 1.500V12H27" /></Icon>
        </ToolSlot>
        <AddressBar>
          <Icon stroke="#6b6e6a"><circle cx="20" cy="20" r="18.700" /><path d="M20 17V29" /><circle cx="20" cy="12" r="2" fill="#6b6e6a" stroke="none" /></Icon>
          <Url><Host>localhost</Host>:8100/tabs/tab2</Url>
          <Icon stroke="#787b77" w={40} h={40}><path d="M1.500 34L13 7L24.500 34M5.500 25H20.500M24 8Q29 13 29.500 21M25.500 1.500Q36 8 36.500 20" /></Icon>
          <ToolSlot $before={48}>
            <Icon stroke="#787b77" w={44} h={42}>
              <path d="M19 34L8 39.500L10.500 26L1.500 17L14 15L20 2.500L26 15L39 17L36 20" />
              <circle cx="32" cy="31.500" r="11.500" fill="#6b6e6a" stroke="none" />
              <path d="M32 25.500V37.500M26 31.500H38" stroke="#efffea" strokeWidth="2.200" />
            </Icon>
          </ToolSlot>
        </AddressBar>
        <ToolSlot $before={53}>
          <Icon w={40} h={40}>
            <path d="M7 6.500H14Q14 1.500 19.500 1.500Q25 1.500 25 6.500H33Q35.500 6.500 35.500 9V14Q29 14 29 20Q29 26 35.500 26V31Q35.500 34 33 34H25Q25 39 19.500 39Q14 39 14 34H9Q6 34 6 31V25.500Q1.500 25 1.500 20Q1.500 15 6 14.500V9Q6 6.500 9 6.500Z" />
          </Icon>
        </ToolSlot>
        <Divider $before={38} />
        <ToolSlot $before={40}>
          <Icon><path d="M18.500 31.500L8 38L10.500 25.500L1.500 16.500L14 14.500L20 2L26 14H39.500M27 21.500H39.500M25 30H39.500" /></Icon>
        </ToolSlot>
        <ToolSlot $before={70}>
          <Icon>
            <rect x="14" y="13" width="25" height="26" rx="5" />
            <path d="M26.500 19V33M19.500 26H33.500M9 30L6 28.500Q5 27.500 4.500 25L1.500 11Q1 7 5 5.500L20 1.500Q25 .5 25.500 5L27 9" />
          </Icon>
        </ToolSlot>
        <Avatar>
          <Icon w={57} h={57} stroke="none">
            <circle cx="28.500" cy="28.500" r="28" fill="#d2cfcd" />
            <circle cx="28.500" cy="21.500" r="12.500" fill="#8b8886" />
            <path d="M8.500 47Q13 36 28.500 36Q44 36 48.500 47Q40 56.500 28.500 56.500Q17 56.500 8.500 47Z" fill="#8b8886" />
          </Icon>
        </Avatar>
        <ToolSlot $before={68}>
          <Icon w={36} h={10} fill={INK} stroke="none"><circle cx="5" cy="5" r="3.200" /><circle cx="18" cy="5" r="3.200" /><circle cx="31" cy="5" r="3.200" /></Icon>
        </ToolSlot>
      </Toolbar>

      <Favorites>
        {FAVORITES.map((f, k) => (
          <Favorite key={k} $w={f.w} $gap={f.gap} $ls={f.ls}>{f.i}<span>{f.t}</span></Favorite>
        ))}
        <FavSpacer />
        <Divider />
        <ToolSlot $before={24}><Favorite $w={256} $gap={19} $ls={-0.42}><FolderIcon /><span>Other favorites</span></Favorite></ToolSlot>
      </Favorites>

      <Body>
        <PageFrame>
          <PageHeader>Summary</PageHeader>
          <Content>
            <TopSpace />
            <Band />
            {ENTRIES.map((e, k) => (
              <Entry key={k}>
                <div>{e.date}</div>
                <EntryGrid>
                  <Cell>Origin: <b>{e.from}</b></Cell>
                  <Cell>Destination: <b>{e.to}</b></Cell>
                  <Cell>Tail Number: <b>{e.tail}</b></Cell>
                  <Cell $indent={325.5}><b>{e.hours}</b></Cell>
                  <Cell>Night: <b>{e.night}</b></Cell>
                  <Cell>Landings: <b>{e.landings}</b></Cell>
                </EntryGrid>
              </Entry>
            ))}
            <Band />
            <PrintButton>PRINT<IoPrint size={47} /></PrintButton>
          </Content>
          <Fab><IoAdd size={60} /></Fab>
          <TabBar>
            <TabBarItem><IoHome size={60} />Home</TabBarItem>
            <TabBarItem $active><IoAirplaneOutline size={60} />Logbook Summary</TabBarItem>
            <TabBarItem><IoPersonOutline size={60} />Account</TabBarItem>
          </TabBar>
          <Dialog>
            <DialogTitle>Add Flight</DialogTitle>
            <DialogSubtitle>Add Flight Details</DialogSubtitle>
            <Fields>
              <Field $date>
                <FieldValue>11/29/2022</FieldValue>
                <Icon w={32} h={32} stroke="#000">
                  <rect x="1.500" y="1.500" width="29" height="28" rx="5" /><path d="M2 8.500H30" />
                  <g fill="#000" stroke="none"><circle cx="9" cy="15.500" r="2" /><circle cx="16" cy="15.500" r="2" /><circle cx="23" cy="15.500" r="2" /><circle cx="9" cy="22.500" r="2" /><circle cx="16" cy="22.500" r="2" /></g>
                </Icon>
              </Field>
              {['SFO', 'ATL', '534', '4.9', '2'].map((v) => (
                <Field key={v}><FieldValue>{v}</FieldValue></Field>
              ))}
              <Field $focus>
                <FieldValue>1<Caret /></FieldValue>
                <Spinner><Arrow /><Arrow $down /></Spinner>
              </Field>
            </Fields>
            <Actions><span>CANCEL</span><span>SAVE</span></Actions>
          </Dialog>
        </PageFrame>

        <Sidebar>
          {SIDE.map((s, k) => <SideSlot key={k} $h={s.h} $nudge={s.n}>{s.i}</SideSlot>)}
          <SideRule />
          <SideSlot>
            <Icon w={41} h={31}>
              <rect x="1.500" y="1.500" width="38" height="28" rx="4" /><path d="M27 2V29M8.500 15.500H21M17 11L21.500 15.500L17 20" />
            </Icon>
          </SideSlot>
          <SideSlot>
            <Icon w={41} h={43}>
              <path d="M17.500 1.500H23.500L25.500 8.500Q28 10.500 30.500 9.500L36 8L39.500 14.500L34.500 19Q33.500 21.500 34.500 24L39.500 28.500L36 35L30.500 33.500Q28 32.500 25.500 34.500L23.500 41.500H17.500L15.500 34.500Q13 32.500 10.500 33.500L5 35L1.500 28.500L6.500 24Q7.500 21.500 6.500 19L1.500 14.500L5 8L10.500 9.500Q13 10.500 15.500 8.500Z" />
              <circle cx="20.500" cy="21.500" r="5.500" />
            </Icon>
          </SideSlot>
        </Sidebar>
      </Body>

      <Taskbar>
        <Weather>
          <WeatherCloud />
          <div><div>54°F</div><Muted>Cloudy</Muted></div>
        </Weather>
        <AppSlot><Start /></AppSlot>
        <SearchPill>
          <Icon w={36} h={36} stroke="#fff" sw={3}><circle cx="22" cy="13.500" r="12" /><path d="M13.500 22L1.500 34" /></Icon>
          Search
        </SearchPill>
        {APPS.map((a, k) => (
          <AppSlot key={k}>
            {a.active ? <AppTile>{a.i}</AppTile> : a.i}
            {(a.run || a.active) && <Indicator $active={a.active} />}
          </AppSlot>
        ))}
        <Tray>
          <TraySlot $after={23}><Icon w={32} h={18} stroke="#fff" sw={2.2}><path d="M1 17L16 1.500L31 17" /></Icon></TraySlot>
          <TraySlot $after={19}>
            <Icon w={41} h={36} stroke="none">
              <circle cx="20" cy="12" r="12" fill="#8f8f8f" /><circle cx="10" cy="17" r="10" fill="#c4c4c4" /><path d="M3 22L30 12V26H10Z" fill="#d8d8d8" />
              <circle cx="29" cy="24" r="12.500" fill="#202020" /><circle cx="29.500" cy="24" r="11" fill="#fff" />
              <path d="M23 23A7 7 0 0 1 35 20M35.500 16V20.500H31M36 25A7 7 0 0 1 24 28M23.500 32V27.500H28" stroke="#1b6fc2" strokeWidth="2" fill="none" />
            </Icon>
          </TraySlot>
          <TraySlot $after={31}>
            <Icon w={40} h={40} stroke="#fff" sw={2.2}>
              <path d="M1.500 20A18.500 18.500 0 0 1 37 12M38 1.500V12H27M20 39A19 19 0 0 1 3 28M2 39V28H13" />
              <circle cx="30" cy="30" r="10" fill="#0078d7" stroke="none" />
            </Icon>
          </TraySlot>
          <TraySlot $after={19}>
            <Icon w={40} h={30} stroke="#fff" sw={2.6}>
              <path d="M1.500 12A26 26 0 0 1 38.500 12M7 17.500A18.500 18.500 0 0 1 33 17.500M12.500 22.500A11 11 0 0 1 27.500 22.500" />
              <circle cx="20" cy="26" r="3" fill="#fff" stroke="none" />
            </Icon>
          </TraySlot>
          <TraySlot $after={19}>
            <Icon w={41} h={34} stroke="#fff" sw={2.4}>
              <path d="M1.500 12Q1.500 10.500 3 10.500H9L17 3.500V30.500L9 23.500H3Q1.500 23.500 1.500 22ZM23 12Q26 17 23 22M28 8Q33.500 17 28 26" />
              <path d="M33 3.500Q41.500 17 33 30.500" stroke="#5c5c5c" />
            </Icon>
          </TraySlot>
          <TraySlot>
            <Icon w={40} h={32} stroke="#fff" sw={2.2}>
              <path d="M15 6.500H31Q35 6.500 35 10V27Q35 30.500 31 30.500H7V17" />
              <rect x="12" y="11" width="19" height="15" rx="1.500" fill="#fff" stroke="none" />
              <path d="M1 6H12V11Q12 16 6.500 16.500Q1 16 1 11Z" fill="#fff" stroke="none" /><path d="M3.500 6V1.500M9.500 6V1.500" />
              <rect x="36" y="14" width="4" height="9" rx="1.500" fill="#fff" stroke="none" />
            </Icon>
          </TraySlot>
          <Clock>8:33 PM<br />12/10/2022</Clock>
          <Badge>1</Badge>
        </Tray>
      </Taskbar>
    </Screen>
  );
}
